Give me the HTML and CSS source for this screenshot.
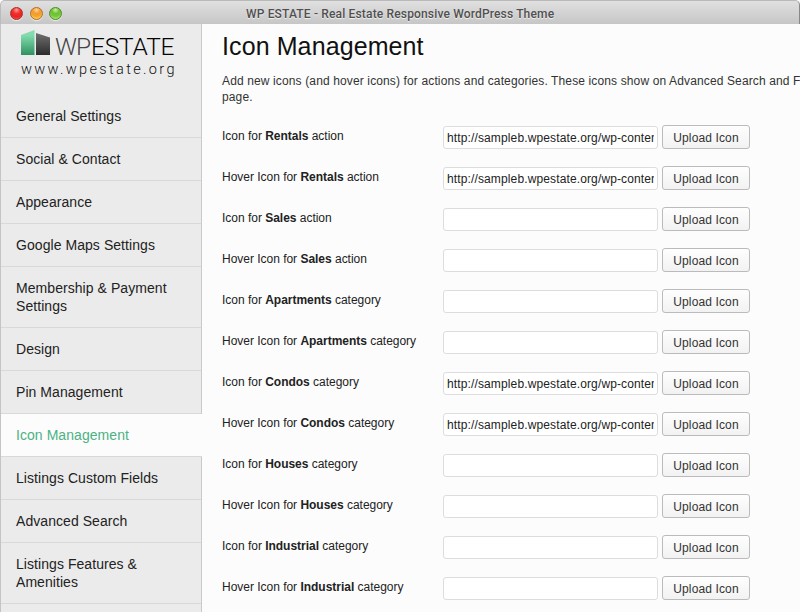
FILE: index.html
```html
<!DOCTYPE html>
<html lang="en">
<head>
<meta charset="utf-8">
<title>WP ESTATE - Real Estate Responsive WordPress Theme</title>
<link rel="stylesheet" href="styles.css">
</head>
<body>
<div class="window">
<header class="titlebar">
  <div class="lights"><i class="light red"></i><i class="light amber"></i><i class="light green"></i></div>
  <span class="caption">WP ESTATE - Real Estate Responsive WordPress Theme</span>
</header>
<div class="layout">
  <aside class="sidebar">
    <svg class="logo" viewBox="0 0 201 71" width="201" height="71">
      <defs>
        <linearGradient id="mint" x1="0" y1="0" x2="0" y2="1"><stop offset="0.2" stop-color="#83dcae"/><stop offset="1" stop-color="#2f9160"/></linearGradient>
        <linearGradient id="coal" x1="0" y1="0" x2="0" y2="1"><stop offset="0" stop-color="#707070"/><stop offset="1" stop-color="#2c2c2c"/></linearGradient>
      </defs>
      <path fill="url(#mint)" d="M20 11 L33.5 6 V31 H20Z"/>
      <path fill="url(#coal)" d="M35 9 L49 13.5 V31 H35Z"/>
      <text class="brand thin" x="54" y="30.700" textLength="36">WP</text>
      <text class="brand" x="90" y="30.700" textLength="83.500">ESTATE</text>
      <text class="site" x="20" y="49.700" textLength="153.500">www.wpestate.org</text>
    </svg>
    <nav>
      <a>General Settings</a>
      <a>Social &amp; Contact</a>
      <a>Appearance</a>
      <a>Google Maps Settings</a>
      <a>Membership &amp; Payment Settings</a>
      <a>Design</a>
      <a>Pin Management</a>
      <a class="active">Icon Management</a>
      <a>Listings Custom Fields</a>
      <a>Advanced Search</a>
      <a>Listings Features &amp; Amenities</a>
      <a></a>
    </nav>
  </aside>
  <main>
    <h1>Icon Management</h1>
    <p>Add new icons (and hover icons) for actions and categories. These icons show on Advanced Search and F<br>page.</p>
    <form>
      <div class="row"><label>Icon for <b>Rentals</b> action</label><div class="field">http://sampleb.wpestate.org/wp-content</div><button type="button">Upload Icon</button></div>
      <div class="row"><label>Hover Icon for <b>Rentals</b> action</label><div class="field">http://sampleb.wpestate.org/wp-content</div><button type="button">Upload Icon</button></div>
      <div class="row"><label>Icon for <b>Sales</b> action</label><div class="field"></div><button type="button">Upload Icon</button></div>
      <div class="row"><label>Hover Icon for <b>Sales</b> action</label><div class="field"></div><button type="button">Upload Icon</button></div>
      <div class="row"><label>Icon for <b>Apartments</b> category</label><div class="field"></div><button type="button">Upload Icon</button></div>
      <div class="row"><label>Hover Icon for <b>Apartments</b> category</label><div class="field"></div><button type="button">Upload Icon</button></div>
      <div class="row"><label>Icon for <b>Condos</b> category</label><div class="field">http://sampleb.wpestate.org/wp-content</div><button type="button">Upload Icon</button></div>
      <div class="row"><label>Hover Icon for <b>Condos</b> category</label><div class="field">http://sampleb.wpestate.org/wp-content</div><button type="button">Upload Icon</button></div>
      <div class="row"><label>Icon for <b>Houses</b> category</label><div class="field"></div><button type="button">Upload Icon</button></div>
      <div class="row"><label>Hover Icon for <b>Houses</b> category</label><div class="field"></div><button type="button">Upload Icon</button></div>
      <div class="row"><label>Icon for <b>Industrial</b> category</label><div class="field"></div><button type="button">Upload Icon</button></div>
      <div class="row"><label>Hover Icon for <b>Industrial</b> category</label><div class="field"></div><button type="button">Upload Icon</button></div>
    </form>
  </main>
</div>
</div>
</body>
</html>
```
FILE: styles.css
```css
* { box-sizing: border-box; }
body { margin: 0; background: #fcfcfc; font-family: "Liberation Sans", Arial, sans-serif; color: #222; }
.window { width: 800px; height: 612px; overflow: hidden; }
.titlebar { height: 24px; display: flex; align-items: center; background: linear-gradient(#e0e0e0, #c6c6c6); border-top: 1px solid #b9b9b9; border-radius: 5px 5px 0 0; border-left: 1px solid #bbb; border-right: 1px solid #888; }
.lights { display: flex; gap: 6.500px; padding: 2px 0 0 9px; width: 245px; }
.light { width: 13px; height: 13px; border-radius: 50%; border: 1px solid; box-shadow: 0 1px 1px #eee; }
.red { background: radial-gradient(circle at 50% 18%, #ff9d96 0, #f2302b 35%, #e92222 65%, #ff6d62); border-color: #a52b28; }
.amber { background: radial-gradient(circle at 50% 18%, #ffd6a0 0, #f39a2e 35%, #f2a62d 60%, #ffe873); border-color: #b06f28; }
.green { background: radial-gradient(circle at 50% 18%, #ccf0a5 0, #6cc032 35%, #76c93b 60%, #ccf584); border-color: #4c8a2c; }
.caption { font: 500 12px/16px Roboto, sans-serif; color: #505050; text-shadow: 0 1px 1px #f4f4f4; padding-top: 3px; white-space: nowrap; letter-spacing: 0.160px; }
.layout { display: flex; height: 588px; }
.sidebar { width: 202px; flex: none; background: #ebebeb; border-left: 1px solid #c4c4c4; border-right: 1px solid #c9c9c9; }
.logo { display: block; }
.brand { font: 300 24.500px Roboto, sans-serif; fill: #050505; }
.thin { fill: #444; }
.site { font: 300 14.500px Roboto, sans-serif; fill: #101010; }
nav a { display: block; padding: 12px 30px 12px 15px; border-bottom: 1px solid #d9d9d9; font-size: 14px; line-height: 18px; letter-spacing: 0.060px; min-height: 43px; }
nav .active { color: #4bb283; background: #fcfcfc; margin-right: -1px; }
main { flex: none; width: 598px; padding: 7px 0 0 20px; overflow: hidden; }
h1 { margin: 0; font-size: 25px; font-weight: 400; line-height: 30px; letter-spacing: 0.100px; color: #111; }
p { margin: 12px 0 20px; font-size: 12px; line-height: 16px; letter-spacing: 0.130px; white-space: nowrap; color: #333; }
.row { display: flex; height: 41px; align-items: flex-start; font-size: 12px; }
label { width: 221px; line-height: 16px; padding-top: 3px; letter-spacing: -0.020px; white-space: nowrap; }
.field { width: 215px; height: 23px; margin: 1px 4px 0 0; border: 1px solid #ddd; border-radius: 3px; background: #fff; padding: 0 3px; line-height: 22px; letter-spacing: 0.130px; white-space: nowrap; overflow: clip; overflow-clip-margin: content-box; }
button { width: 88px; height: 24px; padding: 2px 0 0; border: 1px solid #bbb; border-radius: 3px; background: linear-gradient(#fefefe, #f2f2f2); font: 12px "Liberation Sans", Arial, sans-serif; letter-spacing: 0.130px; color: #333; }
```
